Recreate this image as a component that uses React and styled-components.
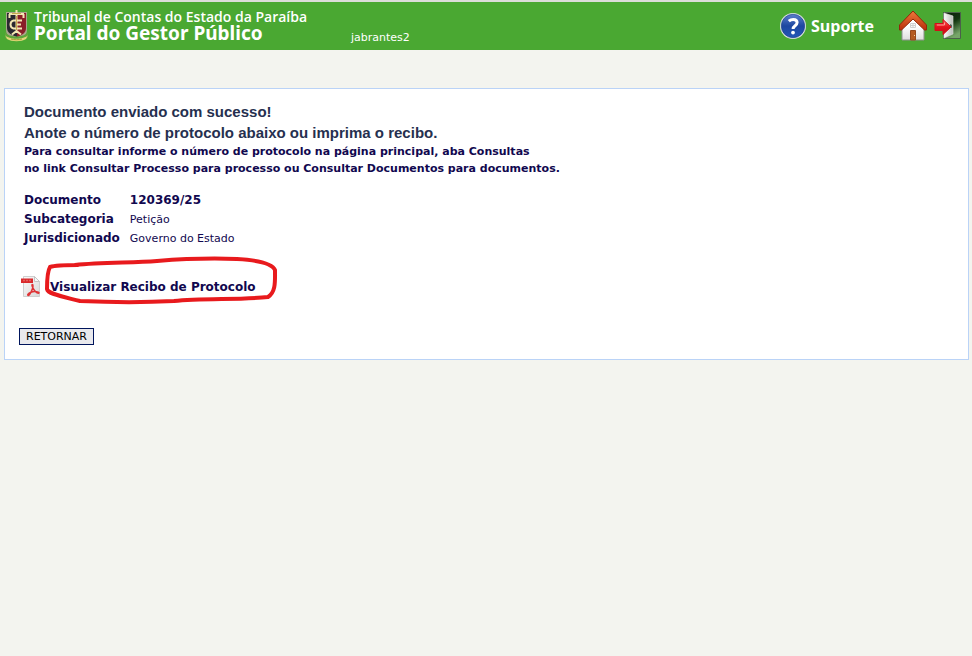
import React from "react";
import styled, { createGlobalStyle } from "styled-components";

const details = [
  { label: "Documento", value: "120369/25", strong: true },
  { label: "Subcategoria", value: "Petição" },
  { label: "Jurisdicionado", value: "Governo do Estado" },
];

export default function App() {
  return (
    <>
      <GlobalStyle />
      <TopBar>
        <Brand>
          <CrestIcon />
          <BrandText>
            <Institution>Tribunal de Contas do Estado da Paraíba</Institution>
            <PortalName>Portal do Gestor Público</PortalName>
          </BrandText>
        </Brand>
        <UserName>jabrantes2</UserName>
        <Actions>
          <SupportLink href="#suporte">
            <HelpIcon />
            Suporte
          </SupportLink>
          <IconLink href="#inicio" aria-label="Início">
            <HomeIcon />
          </IconLink>
          <IconLink href="#sair" aria-label="Sair">
            <ExitIcon />
          </IconLink>
        </Actions>
      </TopBar>
      <Panel>
        <Heading>
          Documento enviado com sucesso!
          <br />
          Anote o número de protocolo abaixo ou imprima o recibo.
        </Heading>
        <Hint>
          Para consultar informe o número de protocolo na página principal, aba Consultas
          <br />
          no link Consultar Processo para processo ou Consultar Documentos para documentos.
        </Hint>
        <Details>
          <tbody>
            {details.map((item) => (
              <tr key={item.label}>
                <Label scope="row">{item.label}</Label>
                <Value $strong={item.strong}>{item.value}</Value>
              </tr>
            ))}
          </tbody>
        </Details>
        <Receipt>
          <PdfIcon />
          <ReceiptLink href="#recibo">
            Visualizar Recibo de Protocolo
            <Marker />
          </ReceiptLink>
        </Receipt>
        <ReturnButton type="button">RETORNAR</ReturnButton>
      </Panel>
    </>
  );
}

const CrestIcon = () => (
  <svg width="24" height="34" viewBox="0 0 24 34" aria-hidden="true">
    <path d="M1 3h21v18c0 5-4 8-10.500 10C5 29 1 26 1 21z" fill="#a9a58c" />
    <path d="M2 4h10v24C7 26 2 24 2 19z" fill="#2a2830" />
    <path d="M12 4h9v15c0 5-4 7-9 9z" fill="#8a1f28" />
    <path d="M0 23c4 6 19 6 23 0v6c-5 4-18 4-23 0z" fill="#5fa63a" />
    <path d="M0 26c4 5 19 5 23 0l-2 4c-5 3-14 3-19 0z" fill="#e2d878" />
    <path d="M6 30c3 1 8 1 11 0" stroke="#a39a35" fill="none" />
    <path
      d="M4 5h15M4.500 5v4M18.500 5v4M11.500 1v23M11 11.500H8.500c-4 1-4 7 0 8H11M17 11.500h-5M16 15.500h-4M17 19.500h-5M7 25.500l4.500-3.500 4.500 3.500"
      stroke="#f3e7b4"
      strokeWidth="2"
      fill="none"
    />
    <path d="M7 4.500h9M11.500 7v14" stroke="#c7a84e" fill="none" />
  </svg>
);

const HelpIcon = () => (
  <svg width="28" height="28" viewBox="0 0 28 28" aria-hidden="true">
    <defs>
      <linearGradient id="helpFill" x1="0" y1="0" x2="0" y2="1">
        <stop offset="0" stopColor="#5c7fcb" />
        <stop offset="0.5" stopColor="#1d47a0" />
        <stop offset="1" stopColor="#2457b8" />
      </linearGradient>
    </defs>
    <circle cx="14" cy="14" r="13" fill="#d9dfe2" />
    <circle cx="14" cy="14" r="11.7" fill="url(#helpFill)" stroke="#173a86" strokeWidth="0.6" />
    <path
      d="M9.800 9.200c1.400-1.300 3-1.800 4.500-1.800 2.300 0 3.800 1.200 3.800 3.200 0 3.200-4 3-4 6.300"
      fill="none"
      stroke="#fff"
      strokeWidth="3"
    />
    <circle cx="14" cy="20.6" r="1.9" fill="#fff" />
  </svg>
);

const HomeIcon = () => (
  <svg width="30" height="32" viewBox="0 0 30 32" aria-hidden="true">
    <defs>
      <linearGradient id="roofFill" x1="0" y1="0" x2="0" y2="1">
        <stop offset="0" stopColor="#ee7a3c" />
        <stop offset="1" stopColor="#b92d08" />
      </linearGradient>
      <linearGradient id="wallFill" x1="0" y1="0" x2="0" y2="1">
        <stop offset="0.4" stopColor="#fff" />
        <stop offset="1" stopColor="#dedede" />
      </linearGradient>
    </defs>
    <path d="M4 17L15 7l11 10v13H4z" fill="url(#wallFill)" stroke="#8f8f8f" />
    <path
      d="M15 1L1.500 15v5h2L15 9l11.500 11h2v-5z"
      fill="url(#roofFill)"
      stroke="#93260a"
      strokeLinejoin="round"
    />
    <path d="M12.500 13.500h5v4h-5zM15 13.500v4M12.500 15.500h5" fill="#fafafa" stroke="#d0d0d0" />
    <path d="M12.500 20.500h5V30h-5z" fill="#b55a20" stroke="#96481a" />
    <path d="M16 25.500h1" stroke="#f4d6a0" />
  </svg>
);

const ExitIcon = () => (
  <svg width="28" height="30" viewBox="0 0 28 30" aria-hidden="true">
    <defs>
      <linearGradient id="doorway" x1="0" y1="0" x2="0.4" y2="1">
        <stop offset="0" stopColor="#0c1a0b" />
        <stop offset="0.5" stopColor="#123511" />
        <stop offset="1" stopColor="#76a568" />
      </linearGradient>
      <linearGradient id="door" x1="0" y1="0" x2="1" y2="0">
        <stop offset="0" stopColor="#fafafa" />
        <stop offset="1" stopColor="#b9bdb8" />
      </linearGradient>
      <linearGradient id="arrow" x1="0" y1="0" x2="0" y2="1">
        <stop offset="0" stopColor="#ff6b60" />
        <stop offset="0.5" stopColor="#e3131b" />
        <stop offset="1" stopColor="#c30d16" />
      </linearGradient>
    </defs>
    <path d="M9.500 1.500h17v26h-17z" fill="url(#doorway)" stroke="#4b604a" />
    <path d="M10 2l9 3v18l-9 4z" fill="url(#door)" stroke="#e2e4e1" strokeWidth="0.6" />
    <path d="M16 13l2 1v3l-2-1z" fill="#596158" />
    <path
      d="M1 12.500h8v-4L17 16l-8 7.500v-4H1z"
      fill="url(#arrow)"
      stroke="#d20f19"
      strokeLinejoin="round"
    />
    <path d="M3 14h7.500v-2.500" fill="none" stroke="#ff9d96" />
  </svg>
);

const PdfIcon = () => (
  <svg width="20" height="24" viewBox="0 0 20 24" aria-hidden="true">
    <defs>
      <linearGradient id="sheet" x1="0" y1="0" x2="1" y2="1">
        <stop offset="0" stopColor="#fafafa" />
        <stop offset="1" stopColor="#d8d8d8" />
      </linearGradient>
    </defs>
    <path d="M2.500 1.500h11l5 5v15h-16z" fill="url(#sheet)" stroke="#cfcfcf" />
    <path d="M13.500 1.500v5h5z" fill="#f7f7f7" stroke="#c4c4c4" />
    <path d="M0 3.500h12V8H0z" fill="#d9292c" />
    <path d="M2 5.500h8" stroke="#e4605d" strokeWidth="1.300" strokeDasharray="2 1" />
    <path
      d="M11.500 9.500c-1.500 0 .5 4 2 6s4 3.500 4.500 2.500c.5-1.300-5-2-8-.8s-4 3-2.800 3.200c1.800 0 4.800-7 4.800-9.500 0-.8-.1-1.400-.5-1.400z"
      fill="none"
      stroke="#df3437"
      strokeWidth="1.500"
    />
  </svg>
);

// hand-drawn red loop around the receipt link
const Marker = () => (
  <MarkerSvg viewBox="0 0 236 52" aria-hidden="true">
    <path
      d="M36 10C24 10 14 10 8 12C5 17 5 25 5 34C6 39 18 41 38 46C60 47 95 48 132 46C160 43 200 45 226 42C234 37 233 26 233 15C230 8 213 5 195 4C170 3 140 4 115 6C90 8 60 7 33 10"
      fill="none"
      stroke="#e81a1d"
      strokeWidth="4"
      strokeLinecap="round"
      strokeLinejoin="round"
    />
  </MarkerSvg>
);

const GlobalStyle = createGlobalStyle`
  body {
    margin: 0;
    background-color: #f3f4ef;
    color: #11084f;
    font-family: Verdana, "DejaVu Sans", sans-serif;
    font-size: 11px;
  }
  a {
    color: inherit;
    text-decoration: none;
  }
  svg {
    display: block;
    flex-shrink: 0;
  }
`;
const TopBar = styled.header`
  display: flex;
  box-sizing: border-box;
  height: 50px;
  padding: 0 10px 0 5px;
  border-top: 2px solid #dcddd9;
  background-color: #4aa832;
  color: #fff;
`;
const Brand = styled.div`
  display: flex;
  align-items: flex-start;
  gap: 5px;
  width: 346px;
  padding-top: 7px;
`;
const BrandText = styled.div`
  font-family: "Noto Sans", sans-serif;
  font-weight: 700;
  white-space: nowrap;
`;
const Institution = styled.div`
  font-family: "Open Sans", sans-serif;
  font-size: 14px;
  font-weight: 600;
  line-height: 16px;
`;
const PortalName = styled.div`
  font-size: 19px;
  line-height: 16px;
`;
const UserName = styled.span`
  align-self: flex-end;
  padding-bottom: 5px;
  line-height: 14px;
`;
const Actions = styled.nav`
  display: flex;
  align-items: center;
  gap: 6px;
  margin-left: auto;
`;
const SupportLink = styled.a`
  display: flex;
  align-items: center;
  gap: 4px;
  margin-right: 18px;
  font-family: "Open Sans", sans-serif;
  font-size: 16px;
  font-weight: 700;
`;
const IconLink = styled.a`
  display: block;
`;
const Panel = styled.main`
  margin: 38px 3px 0 4px;
  padding: 12px 14px 14px;
  border: 1px solid #bad3f7;
  background-color: #fff;
`;
const Heading = styled.h1`
  margin: 0 5px;
  color: #26304f;
  font-family: Arial, "Liberation Sans", sans-serif;
  font-size: 15px;
  line-height: 21px;
`;
const Hint = styled.p`
  margin: 0 5px 14px;
  font-weight: 700;
  line-height: 17px;
`;
const Details = styled.table`
  margin: 0 5px;
  border-collapse: collapse;
`;
const Label = styled.th`
  padding: 0 10px 0 0;
  font-size: 12px;
  line-height: 19px;
  text-align: left;
`;
const Value = styled.td`
  padding: 0;
  font-size: ${(props) => (props.$strong ? "12px" : "11px")};
  font-weight: ${(props) => (props.$strong ? 700 : 400)};
  line-height: 19px;
`;
const Receipt = styled.div`
  display: flex;
  align-items: center;
  gap: 9px;
  margin: 27px 2px 29px;
`;
const ReceiptLink = styled.a`
  position: relative;
  font-size: 12px;
  font-weight: 700;
`;
const MarkerSvg = styled.svg`
  position: absolute;
  top: -25px;
  left: -8px;
  width: 236px;
  height: 52px;
  pointer-events: none;
`;
const ReturnButton = styled.button`
  display: block;
  padding: 0 6px;
  border: 1px solid #00155c;
  border-radius: 0;
  background-color: #e9e9ed;
  color: #000;
  font-family: inherit;
  font-size: 11px;
  line-height: 15px;
`;
